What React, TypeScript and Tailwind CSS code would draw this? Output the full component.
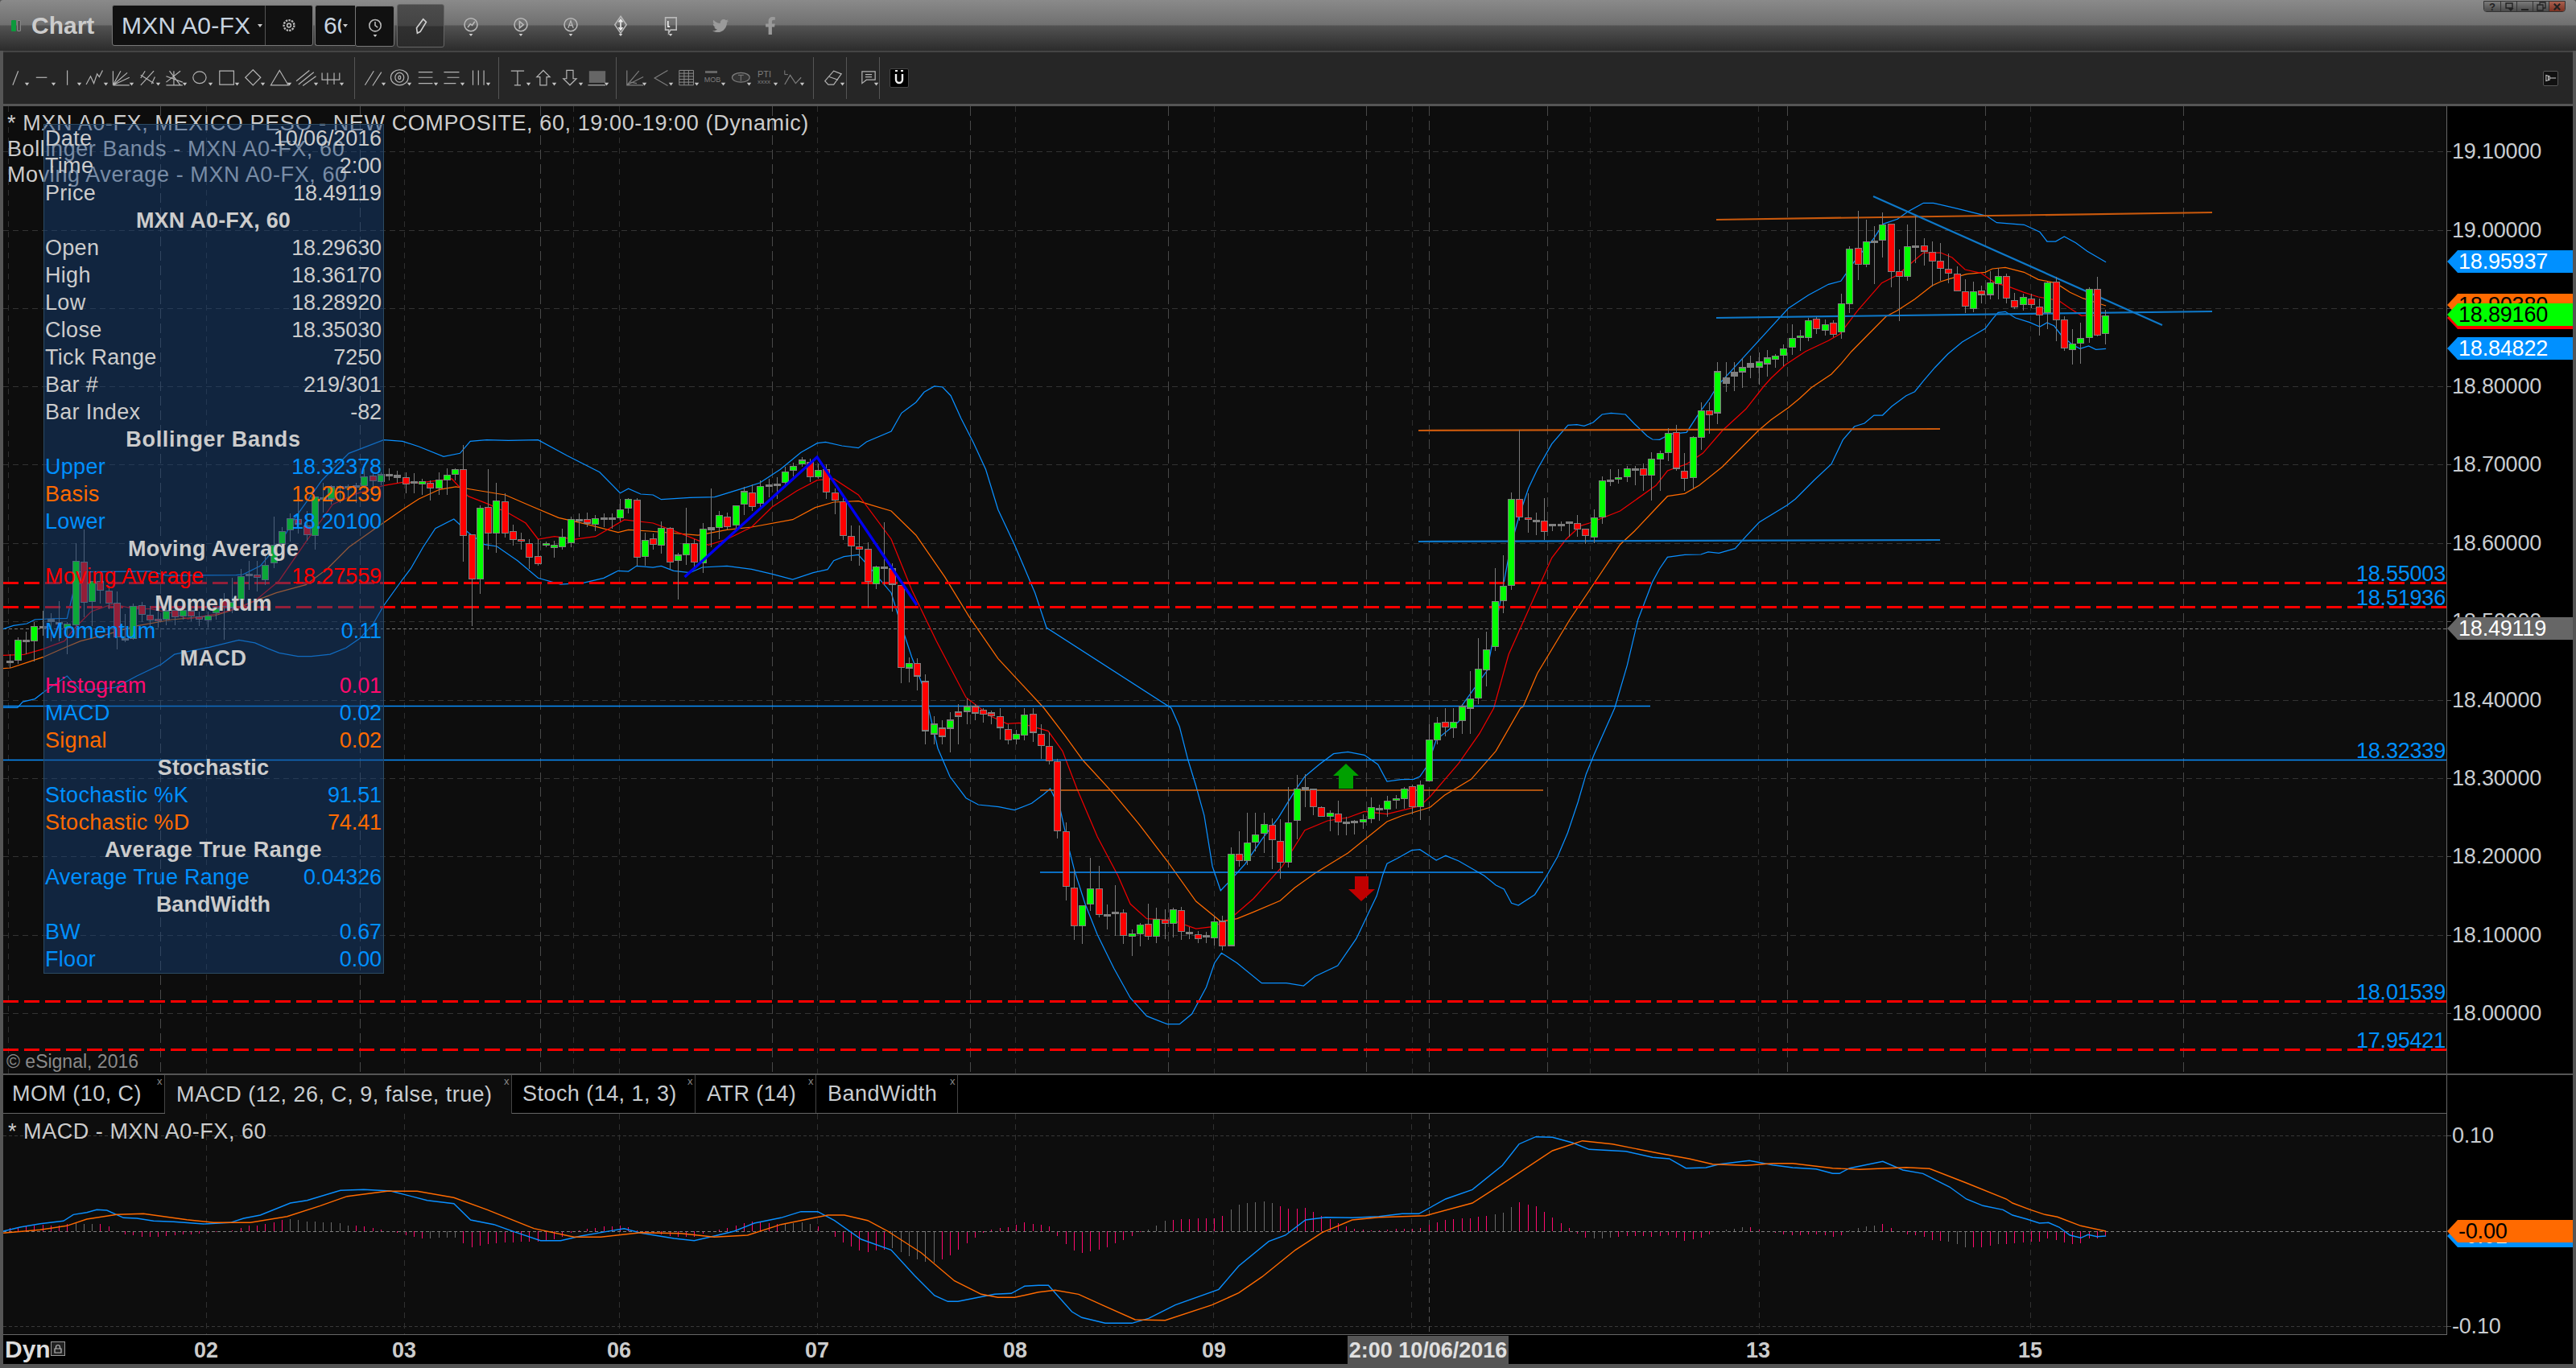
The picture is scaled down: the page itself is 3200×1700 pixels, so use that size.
import { FaTwitter, FaFacebookF } from 'react-icons/fa';

type Bar = { x: number; wt: number; bt: number; bb: number; wb: number; c: number };
type Pt = [number, number];

// candle rows read off the crops: wick top, body top, body bottom, wick bottom, colour (0 red, 1 green, 2 doji)
// y = origin + value / scale, newest bar first
const barRows: [number, number, number[][]][] = [
  [220, 3, [
    [495, 518, 583, 623, 1], [372, 419, 589, 595, 0], [410, 419, 598, 617, 1], [543, 602, 620, 695, 1], [567, 622, 643, 698, 1],
    [520, 533, 637, 648, 0], [372, 392, 532, 612, 0], [390, 395, 505, 567, 1], [453, 485, 514, 590, 0], [435, 455, 475, 490, 0],
    [435, 449, 475, 497, 1], [432, 460, 484, 493, 0], [360, 371, 451, 470, 0], [340, 371, 397, 455, 1], [350, 395, 438, 455, 1],
    [405, 424, 438, 470, 0], [390, 428, 490, 503, 1], [381, 428, 481, 506, 0], [333, 362, 424, 425, 0], [285, 344, 358, 395, 0],
    [245, 314, 340, 387, 0], [240, 281, 313, 407, 0], [228, 257, 276, 330, 0], [143, 256, 260, 320, 2], [178, 260, 370, 387, 1],
    [270, 352, 370, 536, 0], [175, 176, 352, 410, 0], [132, 178, 235, 300, 1], [183, 238, 242, 398, 2], [160, 241, 325, 337, 1],
    [127, 266, 325, 383, 0], [258, 268, 472, 508, 1], [435, 473, 577, 604, 1], [535, 544, 586, 596, 0], [530, 550, 571, 590, 1],
    [522, 530, 565, 585, 0], [525, 536, 598, 613, 1], [570, 592, 598, 647, 1], [548, 602, 634, 662, 1], [625, 640, 664, 705, 1],
    [660, 668, 679, 712, 1],
  ]],
  [0, 1, [
    [435, 445, 452, 468, 1], [438, 450, 456, 478, 1], [442, 452, 456, 470, 2], [445, 457, 462, 482, 1], [450, 463, 467, 486, 2], [450, 470, 476, 487, 2],
    [450, 462, 513, 527, 1],
  ]],
  [480, 3, [
    [60, 91, 107, 178, 0], [60, 91, 190, 236, 1], [185, 190, 340, 380, 1], [250, 316, 343, 390, 0], [145, 173, 306, 315, 0],
    [155, 176, 247, 278, 1], [240, 250, 271, 390, 1], [245, 272, 331, 425, 1], [288, 308, 331, 390, 0], [298, 307, 311, 368, 2],
    [297, 308, 337, 357, 1], [310, 340, 347, 362, 1], [310, 349, 353, 372, 2], [335, 352, 487, 513, 1], [460, 490, 562, 585, 1],
    [530, 532, 556, 587, 0], [480, 511, 532, 562, 0], [503, 505, 509, 560, 2], [505, 514, 517, 540, 2], [514, 515, 517, 540, 2],
    [418, 502, 541, 572, 0], [472, 499, 503, 555, 2], [400, 490, 497, 547, 0], [162, 421, 487, 500, 0], [397, 421, 743, 758, 1],
    [630, 745, 799, 845, 1], [678, 802, 970, 987, 1], [915, 982, 1057, 1120, 1], [938, 1054, 1162, 1185, 1], [1062, 1165, 1200, 1296, 1],
  ]],
  [880, 3, [
    [-15, -6, 46, 97, 1],
    [0, 52, 73, 110, 1], [0, 52, 70, 105, 0], [33, 55, 118, 135, 1], [60, 118, 272, 272, 1], [270, 287, 368, 418, 1],
    [285, 293, 368, 395, 0], [295, 302, 338, 375, 1], [325, 338, 344, 375, 1], [328, 346, 376, 405, 1], [360, 374, 379, 420, 2],
    [332, 371, 412, 430, 1], [395, 415, 425, 450, 1], [418, 421, 425, 470, 2], [405, 424, 428, 473, 2], [345, 394, 424, 473, 0],
    [380, 392, 404, 458, 1], [365, 371, 403, 405, 0], [300, 303, 367, 400, 0], [245, 297, 303, 370, 2], [250, 302, 418, 490, 1],
    [295, 428, 574, 595, 1], [415, 496, 574, 635, 0], [410, 436, 490, 600, 0], [390, 434, 466, 540, 1], [390, 472, 500, 535, 1],
    [390, 502, 568, 585, 1], [458, 544, 568, 590, 0], [520, 544, 885, 888, 1], [775, 795, 886, 903, 0], [775, 796, 856, 885, 1],
    [835, 848, 852, 875, 2], [830, 845, 859, 875, 0], [815, 835, 839, 860, 2], [740, 754, 832, 865, 0], [745, 752, 802, 855, 1],
    [750, 790, 802, 860, 0], [745, 787, 851, 875, 1], [728, 806, 850, 865, 0], [800, 808, 841, 888, 1], [825, 842, 850, 925, 1],
    [750, 764, 847, 878, 0], [660, 760, 764, 850, 2], [732, 769, 773, 825, 2], [588, 674, 769, 780, 0], [558, 674, 731, 755, 1],
    [735, 736, 811, 878, 1], [600, 670, 811, 865, 0], [425, 460, 664, 718, 0], [190, 199, 457, 485, 0], [90, 142, 196, 210, 0],
    [60, 97, 139, 190, 0], [0, 22, 90, 125, 0], [0, 25, 100, 120, 1], [80, 97, 115, 135, 1], [60, 80, 118, 135, 0],
    [0, 31, 72, 118, 0], [10, 18, 28, 60, 0], [0, 8, 22, 55, 0], [-15, -6, 18, 45, 0],
  ]],
  [0, 1, [
    [868, 878, 884, 900, 1], [875, 885, 890, 925, 0], [885, 895, 905, 935, 1], [895, 905, 915, 925, 0], [890, 900, 912, 925, 1],
    [838, 847, 908, 925, 0],
  ]],
  [480, 3, [
    [1015, 1033, 1080, 1135, 0], [1010, 1033, 1050, 1105, 1], [740, 743, 1048, 1108, 0], [660, 681, 738, 840, 0], [508, 673, 680, 740, 2],
    [670, 674, 736, 755, 1], [583, 608, 727, 825, 0], [520, 598, 608, 670, 0], [520, 560, 595, 650, 0], [405, 430, 556, 572, 0],
    [380, 397, 425, 478, 0], [290, 310, 394, 420, 0], [288, 314, 338, 345, 1], [270, 283, 337, 358, 0], [265, 276, 290, 300, 1],
    [285, 298, 314, 335, 1], [300, 319, 359, 378, 1], [340, 364, 368, 420, 2], [345, 368, 372, 415, 2], [350, 374, 437, 455, 1],
    [365, 397, 448, 465, 0], [375, 393, 440, 480, 1], [445, 445, 518, 540, 1], [470, 487, 523, 535, 0], [465, 481, 527, 570, 1],
    [380, 528, 533, 600, 2], [510, 533, 659, 695, 1], [570, 586, 655, 675, 0], [452, 586, 628, 665, 1], [620, 630, 650, 795, 1],
    [525, 529, 655, 680, 0], [505, 529, 593, 625, 1], [548, 568, 589, 610, 0], [545, 574, 634, 670, 1], [418, 424, 637, 670, 0],
    [418, 421, 455, 475, 1], [420, 460, 491, 505, 1], [475, 491, 494, 530, 2], [475, 490, 494, 525, 2], [480, 494, 514, 540, 1],
    [470, 497, 510, 525, 0], [475, 496, 500, 560, 2], [485, 497, 584, 600, 1], [530, 562, 599, 610, 1], [575, 592, 601, 640, 1],
    [580, 586, 593, 600, 1], [570, 634, 661, 670, 0], [570, 586, 637, 680, 0], [545, 571, 578, 610, 0], [515, 541, 571, 595, 0],
    [400, 430, 548, 565, 0], [360, 428, 548, 620, 1], [310, 451, 547, 610, 0], [445, 455, 718, 775, 1], [553, 553, 718, 895, 0],
    [218, 310, 556, 655, 0], [305, 310, 328, 350, 1], [305, 332, 349, 405, 1], [320, 350, 379, 405, 1], [350, 361, 379, 425, 0],
    [345, 355, 364, 405, 1], [325, 355, 360, 400, 2], [320, 340, 364, 400, 0],
  ]],
  [540, 3, [
    [135, 153, 157, 180, 2], [125, 148, 152, 170, 2], [140, 150, 175, 190, 1], [140, 155, 172, 195, 0], [130, 158, 190, 200, 1],
    [180, 190, 193, 255, 2], [185, 193, 196, 240, 2], [190, 193, 198, 255, 2], [190, 195, 240, 260, 1], [180, 235, 240, 290, 2],
    [232, 232, 377, 430, 1], [285, 340, 373, 395, 0], [250, 316, 333, 370, 0], [295, 314, 355, 400, 1], [345, 362, 408, 450, 1],
    [305, 412, 478, 497, 1], [440, 487, 541, 560, 1], [470, 523, 532, 585, 0], [470, 520, 526, 580, 2], [500, 530, 615, 650, 1],
    [535, 625, 645, 665, 1], [590, 620, 640, 765, 0], [640, 648, 664, 690, 1], [660, 676, 691, 720, 1], [660, 680, 688, 715, 0],
    [640, 657, 676, 695, 0], [640, 655, 676, 690, 1], [645, 656, 680, 710, 0], [645, 657, 688, 712, 1], [640, 688, 693, 720, 0],
    [640, 673, 692, 715, 0], [625, 638, 670, 700, 0], [630, 640, 760, 765, 1], [670, 760, 763, 775, 2], [585, 628, 755, 800, 0],
    [565, 583, 628, 650, 0], [515, 548, 580, 630, 0], [545, 548, 622, 715, 1], [355, 475, 625, 680, 0], [405, 472, 710, 760, 1],
    [700, 706, 722, 820, 1], [620, 700, 703, 770, 2], [665, 690, 693, 770, 2], [658, 716, 720, 750, 2], [700, 716, 770, 845, 1],
    [735, 767, 770, 820, 2], [755, 766, 842, 855, 1], [820, 845, 848, 870, 2],
  ]],
];

const bars: Bar[] = [];
barRows.forEach(([origin, scale, rows]) => {
  rows.forEach((r) => {
    const k = bars.length;
    bars.push({
      x: Math.round(2615 - 10.25 * k) + 0.5,
      wt: origin + r[0] / scale,
      bt: origin + r[1] / scale,
      bb: origin + r[2] / scale,
      wb: origin + r[3] / scale,
      c: r[4],
    });
  });
});

const read = (ox: number, sx: number, oy: number, sy: number, list: number[]): Pt[] => {
  const out: Pt[] = [];
  for (let i = 0; i < list.length; i += 2) out.push([ox + list[i] / sx, oy + list[i + 1] / sy]);
  return out;
};

const upperBB = [
  ...read(0, 3, 540, 3, [12, 725, 50, 712, 100, 705, 130, 690, 180, 687, 250, 685, 270, 600, 290, 512, 560, 510, 620, 525, 880, 524, 905, 522, 970, 490, 1050, 395, 1100, 310, 1200, 170, 1300, 70, 1430, 20]),
  ...read(500, 1.96, 480, 3, [0, 205, 40, 225, 100, 262, 140, 250, 165, 205, 205, 200, 258, 202, 330, 200, 400, 258, 480, 320, 530, 398, 550, 382, 580, 402, 610, 405, 630, 422, 700, 415, 760, 413, 830, 380, 870, 360, 920, 310, 970, 247, 1010, 212, 1030, 208, 1070, 222, 1110, 230, 1130, 207, 1190, 168, 1215, 100, 1250, 60, 1270, 22, 1295, 0, 1315, 3, 1335, 35, 1360, 120, 1390, 210, 1420, 310, 1450, 460, 1490, 590, 1515, 680, 1540, 770, 1568, 900]),
  ...read(1200, 1.96, 880, 3, [500, 0, 520, 70, 540, 190, 560, 290, 580, 400, 600, 590, 620, 680, 645, 640, 680, 580, 720, 490, 760, 410, 800, 310, 825, 255, 860, 210, 895, 170, 930, 163, 970, 175, 1003, 210, 1025, 273, 1060, 266, 1090, 265, 1105, 255, 1125, 210, 1145, 118, 1200, 50]),
  ...read(1700, 2.24, 480, 3, [260, 1190, 330, 1060, 370, 780, 395, 600, 420, 480, 445, 380, 470, 310, 510, 215, 555, 145, 580, 143, 600, 148, 625, 135, 650, 105, 675, 100, 715, 105, 740, 140, 775, 185, 790, 198, 810, 199, 840, 178, 885, 172, 920, 100, 950, 45, 970, 0]),
  ...read(2200, 2.8, 220, 3, [0, 560, 60, 490, 130, 440, 200, 400, 243, 388, 300, 300, 357, 230, 390, 175, 440, 157, 475, 130, 530, 97, 565, 97, 650, 118, 750, 145, 785, 170, 880, 178, 935, 205, 960, 240, 990, 240, 1020, 222, 1060, 245, 1100, 277, 1165, 317]),
];

const lowerBB = [
  ...read(0, 3, 690, 2.8, [12, 530, 65, 530, 85, 510, 130, 500, 165, 475, 250, 420, 300, 470, 430, 460, 510, 420, 600, 380, 650, 345, 700, 335, 780, 320, 890, 295, 950, 305, 1000, 325, 1040, 340, 1110, 352, 1160, 352, 1230, 345, 1290, 322, 1340, 290, 1390, 240, 1430, 175]),
  ...read(500, 1.96, 480, 3, [0, 720, 20, 680, 50, 600, 80, 530, 125, 495, 160, 545, 200, 590, 230, 597, 280, 650, 330, 715, 385, 738, 440, 733, 490, 715, 525, 688, 550, 690, 570, 670, 610, 675, 630, 670, 660, 688, 700, 695, 730, 675, 790, 670, 850, 682, 900, 700, 950, 720, 1000, 695, 1035, 683, 1050, 650, 1075, 635, 1110, 628, 1140, 680, 1190, 770, 1210, 870, 1240, 1010, 1270, 1130]),
  ...read(0, 1, 0, 1, [1165, 930, 1180, 965]),
  ...read(1200, 1.96, 880, 3, [0, 335, 30, 360, 80, 368, 118, 380, 160, 355, 190, 320, 205, 300, 230, 380, 250, 520, 265, 610, 290, 730, 320, 845, 360, 970, 400, 1080, 440, 1148, 490, 1178, 520, 1178, 550, 1140, 585, 1040, 605, 950, 622, 913, 660, 950, 720, 1025, 780, 1025, 822, 1035, 850, 1000, 905, 960, 950, 860, 1000, 700, 1015, 620, 1025, 580, 1050, 560, 1085, 530, 1105, 527, 1145, 567, 1168, 550, 1200, 570, 1262, 625, 1290, 660, 1310, 675, 1328, 727, 1345, 735, 1385, 695, 1410, 635, 1440, 555, 1465, 465, 1490, 350, 1510, 245, 1530, 170]),
  ...read(1700, 2.24, 480, 3, [685, 1200, 720, 1040, 750, 870, 790, 730, 810, 680, 832, 637, 880, 628, 925, 627, 945, 618, 975, 622, 1020, 605, 1050, 560, 1087, 507, 1165, 443]),
  ...read(2200, 2.8, 220, 3, [85, 1200, 150, 1130, 210, 1070, 250, 980, 290, 930, 325, 918, 358, 888, 388, 888, 420, 855, 470, 815, 500, 800, 530, 760, 570, 710, 615, 660, 665, 615, 745, 565, 770, 530, 790, 505, 815, 502, 850, 525, 900, 542, 935, 558, 960, 543, 985, 555, 1010, 590, 1048, 625, 1075, 640, 1105, 630, 1130, 643, 1165, 640]),
];

const basis = [
  ...read(0, 3, 540, 3, [12, 872, 40, 870, 100, 850, 160, 830, 240, 795, 300, 770, 400, 745, 500, 715, 640, 690, 800, 675, 880, 650, 950, 620, 1030, 590, 1140, 560, 1220, 500, 1300, 420, 1420, 335]),
  ...read(500, 1.96, 480, 3, [0, 460, 40, 420, 90, 385, 130, 375, 190, 390, 250, 405, 310, 445, 380, 490, 450, 515, 525, 545, 550, 535, 600, 540, 720, 555, 790, 535, 850, 525, 950, 497, 1005, 452, 1050, 432, 1110, 428, 1140, 442, 1190, 465, 1250, 555, 1320, 710, 1380, 860, 1450, 1015]),
  ...read(1200, 1.96, 880, 3, [190, 0, 240, 100, 285, 195, 360, 320, 420, 430, 490, 570, 560, 720, 620, 795, 660, 785, 700, 760, 765, 718, 800, 670, 850, 615, 930, 540, 1025, 423, 1060, 402, 1130, 370, 1165, 325, 1230, 265, 1290, 160, 1350, 0]),
  ...read(1700, 2.24, 480, 3, [430, 1195, 470, 1070, 560, 870, 620, 750, 700, 590, 740, 540, 800, 455, 832, 410, 880, 400, 920, 370, 985, 300, 1085, 165]),
  ...read(2200, 2.8, 220, 3, [0, 905, 60, 860, 100, 825, 140, 785, 210, 735, 245, 695, 280, 650, 340, 585, 400, 520, 440, 497, 500, 455, 560, 405, 590, 390, 620, 380, 680, 362, 745, 355, 770, 342, 815, 337, 880, 355, 930, 382, 990, 395, 1040, 430, 1085, 452, 1130, 468, 1165, 480]),
];

const movAvg = [
  ...read(0, 3, 540, 3, [12, 823, 90, 820, 160, 800, 240, 770, 280, 720, 340, 660, 420, 632, 500, 650, 560, 650, 640, 665, 700, 687, 800, 670, 860, 655, 950, 620, 1040, 545, 1140, 400, 1240, 260, 1330, 220, 1430, 190, 1500, 178, 1560, 180]),
  ...read(500, 1.96, 480, 3, [120, 345, 160, 410, 210, 440, 260, 475, 300, 510, 330, 570, 370, 560, 420, 570, 470, 560, 540, 498, 610, 510, 680, 550, 720, 575, 745, 592, 790, 570, 850, 525, 900, 450, 960, 390, 1010, 350, 1050, 345, 1110, 405, 1190, 570, 1240, 760, 1300, 950]),
  ...read(1200, 1.96, 880, 3, [0, -40, 60, 30, 100, 58, 130, 55, 200, 85, 235, 160, 270, 300, 320, 480, 370, 625, 400, 730, 440, 785, 500, 790, 560, 822, 600, 815, 640, 790, 700, 710, 770, 590, 825, 455, 880, 420, 930, 408, 970, 385, 1025, 395, 1065, 380, 1105, 365, 1130, 330, 1200, 205, 1250, 95, 1285, 0]),
  ...read(1700, 2.24, 480, 3, [390, 1000, 460, 790, 510, 640, 550, 570, 590, 520, 615, 510, 700, 465, 800, 370, 832, 315, 885, 290, 930, 250, 985, 165, 1050, 85, 1100, 0]),
  ...read(2200, 2.8, 220, 3, [0, 750, 50, 700, 120, 650, 200, 610, 240, 585, 300, 500, 385, 395, 440, 365, 500, 310, 530, 282, 590, 282, 630, 300, 675, 345, 730, 358, 780, 395, 830, 410, 880, 430, 930, 447, 1000, 460, 1040, 490, 1080, 517, 1110, 515, 1160, 520]),
];

const macdLine = [
  ...read(0, 1.206, 1280, 3, [5, 750, 30, 735, 60, 722, 95, 712, 110, 688, 130, 680, 145, 670, 160, 672, 185, 700, 205, 702, 230, 712, 260, 715, 305, 723, 345, 718, 365, 702, 390, 690, 435, 645, 460, 635, 510, 598, 545, 595, 585, 600, 640, 635, 680, 647, 705, 708, 740, 725, 770, 752, 810, 785, 840, 785, 870, 768, 935, 740, 960, 757, 1010, 777, 1040, 785, 1070, 768, 1100, 750, 1130, 720, 1170, 700, 1200, 677, 1225, 677, 1250, 710, 1290, 780, 1335, 820, 1370, 915, 1400, 990, 1420, 1012, 1435, 1012, 1490, 985, 1515, 982, 1535, 955]),
  ...read(1290, 1.206, 1390, 3, [0, 622, 15, 622, 50, 720, 65, 742, 100, 763, 140, 763, 165, 745, 205, 695, 270, 637, 300, 550, 345, 458, 370, 435, 400, 378, 430, 368, 470, 370, 510, 365, 545, 355, 570, 355, 610, 300, 650, 265, 695, 175, 720, 95, 745, 68, 770, 70, 800, 90, 825, 115, 880, 122, 920, 145, 945, 150, 970, 185, 1000, 183, 1020, 170, 1065, 157, 1100, 173, 1130, 183, 1165, 188, 1190, 205, 1200, 205, 1215, 185, 1265, 160, 1295, 192, 1325, 205, 1365, 255, 1390, 300, 1415, 325, 1445, 340]),
  ...read(2500, 2.24, 1280, 3, [0, 690, 40, 705, 75, 720, 100, 718, 130, 735, 160, 765, 190, 775, 210, 763, 235, 770, 260, 768]),
];

const signalLine = [
  ...read(0, 1.206, 1280, 3, [5, 757, 60, 745, 100, 730, 130, 705, 175, 688, 215, 685, 280, 707, 320, 718, 375, 718, 430, 695, 480, 655, 520, 620, 580, 601, 625, 601, 680, 625, 730, 670, 800, 740, 860, 772, 900, 772, 960, 755, 1020, 758, 1070, 772, 1120, 765, 1170, 725, 1240, 690, 1265, 690, 1300, 710, 1330, 750, 1380, 830, 1430, 935, 1470, 985, 1495, 997, 1520, 997]),
  ...read(1290, 1.206, 1390, 3, [0, 647, 25, 640, 60, 655, 100, 700, 145, 750, 190, 752, 260, 695, 300, 650, 335, 590, 385, 490, 425, 425, 470, 378, 510, 368, 580, 362, 650, 315, 700, 235, 770, 120, 815, 83, 860, 95, 930, 130, 975, 150, 1010, 170, 1060, 175, 1100, 167, 1130, 167, 1190, 185, 1230, 190, 1300, 182, 1335, 187, 1390, 240, 1450, 300]),
  ...read(2500, 2.24, 1280, 3, [0, 645, 50, 670, 90, 688, 125, 697, 190, 730, 260, 750]),
];

const toPath = (pts: Pt[]) => pts.map((p) => `${p[0].toFixed(1)},${p[1].toFixed(1)}`).join(' ');

const valueAt = (pts: Pt[], x: number) => {
  for (let i = 1; i < pts.length; i++) {
    if (x <= pts[i][0]) {
      const t = (x - pts[i - 1][0]) / (pts[i][0] - pts[i - 1][0] || 1);
      return pts[i - 1][1] + t * (pts[i][1] - pts[i - 1][1]);
    }
  }
  return pts[pts.length - 1][1];
};

const grayRanges = [[91, 124], [356, 440], [530, 572], [970, 1012], [1103, 1161], [1420, 1450], [1525, 1590], [1854, 1887], [1978, 2003], [2144, 2170], [2297, 2330], [2420, 2450], [2480, 2492]];
const barColor = { 0: '#ff0000', 1: '#00ff00', 2: '#808080' } as Record<number, string>;

const majorX = [199, 447, 671, 959, 1205, 1451, 1697, 1775, 1922, 2220, 2466, 2712];
const minorX = [10, 256, 502, 712, 769, 1015, 1261, 1508, 1754, 1975, 2184, 2522];
const gridY = [188, 286, 383, 480, 577, 675, 772, 870, 967, 1064, 1162, 1259];
const redLevels = [724, 754, 1244, 1304];

const PriceChart = () => (
  <svg viewBox="4 132 3035 1202" className="absolute inset-0 w-[3035px] h-[1202px]">
    {gridY.map((y) => <line key={y} x1="4" x2="3039" y1={y + 0.5} y2={y + 0.5} stroke="#333333" strokeDasharray="7 5" />)}
    {minorX.map((x) => <line key={x} x1={x + 0.5} x2={x + 0.5} y1="132" y2="1334" stroke="#2e2e2e" strokeDasharray="7 6" />)}
    {majorX.map((x) => <line key={x} x1={x + 0.5} x2={x + 0.5} y1="132" y2="1334" stroke="#484848" strokeDasharray="12 6" />)}
    <line x1="4" x2="3039" y1="781.5" y2="781.5" stroke="#7a7a7a" strokeDasharray="4 3" />

    <polyline points={toPath(upperBB)} fill="none" stroke="#0a8fff" strokeWidth="1.25" />
    <polyline points={toPath(lowerBB)} fill="none" stroke="#0a8fff" strokeWidth="1.25" />
    <polyline points={toPath(basis)} fill="none" stroke="#ff6a00" strokeWidth="1.25" />
    <polyline points={toPath(movAvg)} fill="none" stroke="#ee0000" strokeWidth="1.25" />

    {redLevels.map((y) => <line key={y} x1="4" x2="3039" y1={y} y2={y} stroke="#ff0000" strokeWidth="3" strokeDasharray="19 7" shapeRendering="crispEdges" />)}
    <line x1="4" x2="2050" y1="877.5" y2="877.5" stroke="#0a8fff" strokeWidth="1.4" />
    <line x1="4" x2="3039" y1="944.5" y2="944.5" stroke="#0a8fff" strokeWidth="1.4" />

    <line x1="2132" x2="2748" y1="273" y2="264" stroke="#c8580c" strokeWidth="2.2" />
    <line x1="1762" x2="2410" y1="535" y2="533" stroke="#c8580c" strokeWidth="2.2" />
    <line x1="1292" x2="1917" y1="982" y2="982" stroke="#e06a10" strokeWidth="1.6" />
    <line x1="2132" x2="2748" y1="395" y2="387" stroke="#0e78c8" strokeWidth="2.2" />
    <line x1="1762" x2="2410" y1="673" y2="671" stroke="#0e78c8" strokeWidth="2.2" />
    <line x1="1292" x2="1917" y1="1084" y2="1084" stroke="#0a8fff" strokeWidth="1.6" />
    <line x1="2327" x2="2686" y1="244" y2="404" stroke="#0e78c8" strokeWidth="2.2" />

    {bars.map((b) => (
      <g key={b.x} shapeRendering="crispEdges">
        <line x1={b.x} x2={b.x} y1={b.wt} y2={b.wb} stroke="#7a7a7a" />
        <rect x={b.x - 4} y={b.bt} width="8" height={Math.max(b.bb - b.bt, 2)} fill={barColor[b.c]} stroke="#808080" strokeWidth="1.5" />
      </g>
    ))}

    <polyline points="850.5,717 1015,568 1139,752" fill="none" stroke="#0000f0" strokeWidth="3.4" />
    <polygon points="1672,949 1688,964 1681,964 1681,980 1663,980 1663,964 1656,964" fill="#00a000" />
    <polygon points="1683,1089 1700,1089 1700,1105 1708,1105 1691,1120 1675,1105 1683,1105" fill="#c00000" />
  </svg>
);

const MacdChart = () => {
  const xs = bars.map((b) => b.x).filter((x) => x > 8);
  return (
    <svg viewBox="4 1384 3035 275" className="absolute inset-0 w-[3035px] h-[275px]">
      {[1411, 1648].map((y) => <line key={y} x1="4" x2="3039" y1={y + 0.5} y2={y + 0.5} stroke="#383838" strokeDasharray="4 3" />)}
      {[256, 502, 769, 1015, 1261, 1507, 1753, 2185, 2522].map((x) => <line key={x} x1={x + 0.5} x2={x + 0.5} y1="1384" y2="1659" stroke="#303030" strokeDasharray="7 6" />)}
      <line x1="1775.5" x2="1775.5" y1="1384" y2="1659" stroke="#555555" strokeDasharray="7 5" />
      {xs.map((x) => {
        const h = valueAt(signalLine, x) - valueAt(macdLine, x);
        const isGray = grayRanges.some((r) => x >= r[0] && x <= r[1]);
        return <line key={x} x1={x} x2={x} y1="1530" y2={1530 - h} stroke={isGray ? '#6a6a6a' : '#ff0a6e'} strokeWidth="1" shapeRendering="crispEdges" />;
      })}
      <line x1="4" x2="3039" y1="1530.5" y2="1530.5" stroke="#808080" strokeDasharray="4 3" />
      <polyline points={toPath(macdLine)} fill="none" stroke="#0a8fff" strokeWidth="1.4" />
      <polyline points={toPath(signalLine)} fill="none" stroke="#ff6a00" strokeWidth="1.4" />
      <line x1="4" x2="3039" y1="1658.5" y2="1658.5" stroke="#666666" />
    </svg>
  );
};

const axisLabels = [
  ['19.10000', 188], ['19.00000', 286], ['18.90000', 383], ['18.80000', 480], ['18.70000', 577], ['18.60000', 675],
  ['18.50000', 772], ['18.40000', 870], ['18.30000', 967], ['18.20000', 1064], ['18.10000', 1162], ['18.00000', 1259],
] as [string, number][];

const flags = [
  { t: '18.95937', y: 311, bg: 'bg-[#0090ff]', fg: 'text-white' },
  { t: '18.90380', y: 365, bg: 'bg-[#ff6a00]', fg: 'text-black' },
  { t: '18.87000', y: 381, bg: 'bg-[#ff0000]', fg: 'text-black' },
  { t: '18.89160', y: 377, bg: 'bg-[#00ff00]', fg: 'text-black' },
  { t: '18.84822', y: 419, bg: 'bg-[#0090ff]', fg: 'text-white' },
  { t: '18.49119', y: 767, bg: 'bg-[#666666]', fg: 'text-white' },
];

const Flag = ({ t, top, bg, fg }: { t: string; top: number; bg: string; fg: string }) => (
  <div
    className={`absolute left-0 w-full h-[28px] ${bg} ${fg} pl-[14px] text-[27px] leading-[28px] tracking-[-0.2px] [clip-path:polygon(0_50%,13px_0,100%_0,100%_100%,13px_100%)]`}
    style={{ top }}
  >
    {t}
  </div>
);

const PriceAxis = () => (
  <div className="relative w-[157px] h-[1202px] bg-black border-l border-[#666666] overflow-hidden">
    {axisLabels.map(([t, y]) => (
      <div key={t} className="absolute left-0 flex items-center h-[30px] text-[#c8ccd0] text-[27px] tracking-[-0.2px]" style={{ top: y - 132 - 15 }}>
        <span className="w-[5px] h-px bg-[#555555] mr-[1px]" />
        {t}
      </div>
    ))}
    {flags.map((f) => <Flag key={f.t} t={f.t} top={f.y - 132} bg={f.bg} fg={f.fg} />)}
  </div>
);

type Row = { l: string; v?: string; c?: string; track?: string };
const gray = 'text-[#cccccc]';
const blue = 'text-[#0090ff]';
const orange = 'text-[#ff6a00]';
const red = 'text-[#ff0000]';
const pink = 'text-[#ff0a6e]';

const dataRows: Row[] = [
  { l: 'Date', v: '10/06/2016', c: gray },
  { l: 'Time', v: '2:00', c: gray },
  { l: 'Price', v: '18.49119', c: gray },
  { l: 'MXN A0-FX, 60', track: 'tracking-[0.2px]' },
  { l: 'Open', v: '18.29630', c: gray },
  { l: 'High', v: '18.36170', c: gray },
  { l: 'Low', v: '18.28920', c: gray },
  { l: 'Close', v: '18.35030', c: gray },
  { l: 'Tick Range', v: '7250', c: gray },
  { l: 'Bar #', v: '219/301', c: gray },
  { l: 'Bar Index', v: '-82', c: gray },
  { l: 'Bollinger Bands', track: 'tracking-[0.7px]' },
  { l: 'Upper', v: '18.32378', c: blue },
  { l: 'Basis', v: '18.26239', c: orange },
  { l: 'Lower', v: '18.20100', c: blue },
  { l: 'Moving Average', track: 'tracking-[0.4px]' },
  { l: 'Moving Average', v: '18.27559', c: red },
  { l: 'Momentum', track: 'tracking-[0.2px]' },
  { l: 'Momentum', v: '0.11', c: blue },
  { l: 'MACD', track: 'tracking-[0.5px]' },
  { l: 'Histogram', v: '0.01', c: pink },
  { l: 'MACD', v: '0.02', c: blue },
  { l: 'Signal', v: '0.02', c: orange },
  { l: 'Stochastic', track: 'tracking-[0.2px]' },
  { l: 'Stochastic %K', v: '91.51', c: blue },
  { l: 'Stochastic %D', v: '74.41', c: orange },
  { l: 'Average True Range', track: 'tracking-[0.55px]' },
  { l: 'Average True Range', v: '0.04326', c: blue },
  { l: 'BandWidth' },
  { l: 'BW', v: '0.67', c: blue },
  { l: 'Floor', v: '0.00', c: blue },
];

const DataWindow = () => (
  <div className="absolute left-[50px] top-[22px] w-[423px] border border-[#2b4a62] bg-[rgba(24,67,122,0.465)] pl-[1px] pr-[2px] text-[27px] leading-[34px]">
    {dataRows.map((r, i) =>
      r.v ? (
        <div key={i} className={`flex justify-between h-[34px] tracking-[0.3px] ${r.c}`}>
          <span>{r.l}</span>
          <span className="tracking-[-0.1px]">{r.v}</span>
        </div>
      ) : (
        <div key={i} className={`h-[34px] text-center font-bold text-[#cccccc] ${r.track ?? ''}`}>{r.l}</div>
      ),
    )}
  </div>
);

const levelLabels = [
  { t: '18.55003', y: 713 }, { t: '18.51936', y: 743 }, { t: '18.32339', y: 933 }, { t: '18.01539', y: 1233 }, { t: '17.95421', y: 1293 },
];

// title bar glyphs, 30x36 box
const TopIcon = ({ children, caret = true }: { children: React.ReactNode; caret?: boolean }) => (
  <svg viewBox="0 0 30 36" className="w-[24px] h-[29px] text-[#b8b8b8]" fill="none" stroke="currentColor" strokeWidth="2">
    {children}
    {caret && <path d="M12 31h6l-3 4z" fill="#d0d0d0" stroke="none" />}
  </svg>
);

const titleIcons = [
  <><circle cx="15" cy="17" r="10" /><path d="M10 21l4-5 3 2 4-6" /></>,
  <><circle cx="15" cy="17" r="10" /><path d="M13 12l6 5-6 5z" /></>,
  <><circle cx="15" cy="17" r="10" /><path d="M11 22l4-11 4 11M12.5 18h5" strokeWidth="1.6" /></>,
  <><path d="M15 4l9 13-9 13-9-13z" /><path d="M15 9v16M12 13l3-4 3 4M12 21l3 4 3-4" stroke="#eeeeee" /></>,
  <><path d="M7 6H24V25H15L12 30V25H7z" /><path d="M11 11V20H14" stroke="#eeeeee" /></>,
];

// toolbar glyphs, 24x30 box squeezed to the strip height
const toolPaths: Record<string, string> = {
  line: 'M8 27L13 3',
  hline: 'M5 14H15',
  vline: 'M10 2V27',
  wave: 'M3 26L7 12L10 24L13 8L15 13L18 2',
  fan: 'M4 27V3M4 27L17 6M4 27L19 14M4 27H19M4 27L11 3',
  cross: 'M5 27L17 3M5 10L17 24M9 3L5 15M15 25L18 13',
  gann: 'M4 27H19M7 3L17 27M17 3L4 22M11 3V27M4 12L19 22',
  circle: 'M17 14a6 10 0 1 1-12 0a6 10 0 1 1 12 0z',
  rect: 'M5 3H18V26H5z',
  diamond: 'M12 1L19 14L12 27L5 14z',
  triangle: 'M12 2L20 27H4z',
  channel: 'M3 20L15 2M5 26L19 5M9 28L21 12',
  pitch: 'M3 6V18H19V6M8 6V26M14 6V26',
  par: 'M4 27L12 3M11 28L19 5',
  rings: 'M20 14a8 13 0 1 1-16 0a8 13 0 1 1 16 0zM16 14a4 8 0 1 1-8 0a4 8 0 1 1 8 0zM13 14a1 3 0 1 1-2 0a1 3 0 1 1 2 0z',
  fib: 'M5 5H18M5 14H18M5 24H18',
  fib2: 'M4 5H18M7 14H18M4 24H15',
  vlines: 'M7 2V27M12 2V27M17 2V27',
  text: 'M5 3H17M11 3V27M8 27H14',
  up: 'M11 2L17 13H14V27H8V13H5z',
  down: 'M8 2H14V16H17L11 27L5 16H8z',
  block: 'M4 27H20',
  dfan: 'M5 2V27H20M5 27L16 3M5 27L20 13M8 22L14 24',
  arrows: 'M18 2L6 15L18 28',
  pivot: 'M6 3H18',
  tl: 'M11 10H16M13.5 10V20',
  zig: 'M5 26L10 10L15 24L20 14',
  eraser: 'M5 20L13 3L20 8L13 26H8zM9 13L17 18',
  chat: 'M8 4H20V18H12L8 24zM11 9H17M11 13H17',
};

const toolCaret = 'M19 23h4l-2 5z';

const Tool = ({ name, dim }: { name: string; dim?: boolean }) => (
  <svg viewBox="0 0 24 30" preserveAspectRatio="none" className={`w-[32.6px] h-[22px] ${dim ? 'text-[#7d7d7d]' : 'text-[#b4b4b4]'}`} fill="none" stroke="currentColor">
    <path d={toolPaths[name]} strokeWidth="1.2" vectorEffect="non-scaling-stroke" />
    {name === 'block' && <rect x="5" y="3" width="15" height="20" fill="#666666" stroke="none" />}
    {name === 'tl' && <circle cx="13.5" cy="14" r="8" fill="#333333" strokeWidth="1.2" vectorEffect="non-scaling-stroke" />}
    {name === 'tl' && <path d="M11 10H16M13.5 10V20" strokeWidth="1" vectorEffect="non-scaling-stroke" />}
    {name === 'zig' && <path d="M5 2V9H8" strokeWidth="1" vectorEffect="non-scaling-stroke" />}
    <path d={toolCaret} fill="#c4c4c4" stroke="none" />
  </svg>
);

const PivotIcon = () => (
  <div className="relative w-[32.6px] h-[22px]">
    <div className="absolute left-[6px] top-[2px] w-[15px] h-[3px] bg-[#666666]" />
    <span className="absolute left-[5px] top-[8px] text-[9px] leading-[10px] text-[#7d7d7d]">MOB</span>
    <svg viewBox="0 0 24 30" preserveAspectRatio="none" className="absolute inset-0 w-full h-full"><path d={toolCaret} fill="#c4c4c4" /></svg>
  </div>
);

const PtiIcon = () => (
  <div className="relative w-[32.6px] h-[22px]">
    <span className="absolute left-[6px] top-[0px] text-[11px] leading-[12px] text-[#7d7d7d]">PTI</span>
    <span className="absolute left-[6px] top-[12px] text-[8px] leading-[8px] text-[#7d7d7d]">xxxx</span>
    <svg viewBox="0 0 24 30" preserveAspectRatio="none" className="absolute inset-0 w-full h-full"><path d={toolCaret} fill="#c4c4c4" /></svg>
  </div>
);

const GridIcon = () => (
  <svg viewBox="0 0 24 30" preserveAspectRatio="none" className="w-[32.6px] h-[22px]" fill="none" stroke="#8a8a8a">
    <path d="M5 2H18V27H5zM5 7H18M5 12H18M5 17H18M5 22H18M9.5 2V27M13.5 2V27" strokeWidth="1" vectorEffect="non-scaling-stroke" />
    <path d={toolCaret} fill="#c4c4c4" stroke="none" />
  </svg>
);

const Sep = ({ cls }: { cls: string }) => <div className={`w-px h-[52px] bg-[#555555] ${cls}`} />;

const Toolbar = () => (
  <div className="mx-[4px] h-[64px] bg-[#262626] flex items-center pl-px">
    <div className="flex">
      {['line', 'hline', 'vline', 'wave', 'fan', 'cross', 'gann', 'circle', 'rect', 'diamond', 'triangle', 'channel', 'pitch'].map((n) => <Tool key={n} name={n} />)}
    </div>
    <Sep cls="ml-[11px]" />
    <div className="flex ml-[7px]">
      {['par', 'rings', 'fib', 'fib2', 'vlines'].map((n) => <Tool key={n} name={n} />)}
    </div>
    <Sep cls="ml-[8px]" />
    <div className="flex ml-[8px]">
      {['text', 'up', 'down', 'block'].map((n) => <Tool key={n} name={n} />)}
    </div>
    <Sep cls="ml-[7px]" />
    <div className="flex ml-[6px]">
      <Tool name="dfan" dim />
      <Tool name="arrows" dim />
      <GridIcon />
      <PivotIcon />
      <Tool name="tl" dim />
      <PtiIcon />
      <Tool name="zig" dim />
    </div>
    <Sep cls="ml-[10px]" />
    <div className="ml-[7px]"><Tool name="eraser" /></div>
    <Sep cls="ml-0" />
    <div className="ml-[8px]"><Tool name="chat" /></div>
    <Sep cls="ml-0" />
    <div className="ml-[12px] w-[24px] h-[24px] bg-black border border-[#444444] rounded-[2px] flex items-center justify-center">
      <svg viewBox="0 0 16 20" className="w-[16px] h-[20px]" fill="none" stroke="#eeeeee" strokeWidth="2.4">
        <path d="M4 5V12a4 4 0 0 0 8 0V5" />
        <path d="M3 1H6M10 1H13" strokeWidth="2" />
      </svg>
    </div>
    <div className="ml-auto mr-[18px] w-[19px] h-[19px] bg-[#111111] border border-[#555555] rounded-[2px] flex items-center justify-center">
      <svg viewBox="0 0 16 16" className="w-[14px] h-[14px]" fill="none" stroke="#cccccc" strokeWidth="1.2">
        <path d="M1 4L6 5.5V10.5L1 12zM6 8H15M4 5V11" />
      </svg>
    </div>
  </div>
);

const WinButtons = () => (
  <div className="flex h-[14px] mt-px border border-[#333333] rounded-b-[4px] overflow-hidden">
    {['?', 'w', 'm', 'r', 'x'].map((k) => (
      <div key={k} className={`w-[20px] h-full flex items-center justify-center border-l first:border-l-0 border-[#333333] ${k === 'x' ? 'bg-gradient-to-b from-[#a8604f] to-[#7d3020]' : 'bg-gradient-to-b from-[#7a7a7a] to-[#4a4a4a]'}`}>
        {k === '?' && <span className="text-[13px] font-bold leading-none text-[#222222]">?</span>}
        {k === 'w' && <svg viewBox="0 0 12 12" className="w-[12px] h-[12px]" fill="none" stroke="#222222" strokeWidth="1.4"><path d="M2 2H10V8H2zM6 9h4l-2 2z" /></svg>}
        {k === 'm' && <div className="w-[9px] h-[2px] mt-[7px] bg-[#222222]" />}
        {k === 'r' && <svg viewBox="0 0 12 12" className="w-[12px] h-[12px]" fill="none" stroke="#222222" strokeWidth="1.3"><path d="M1 4H8V11H1zM4 4V1H11V8H8" /></svg>}
        {k === 'x' && <svg viewBox="0 0 12 12" className="w-[11px] h-[11px]" fill="none" stroke="#222222" strokeWidth="2.4"><path d="M2 2L10 10M10 2L2 10" /></svg>}
      </div>
    ))}
  </div>
);

const TitleBar = () => (
  <div className="relative h-[63px] flex items-center rounded-t-[4px] bg-[linear-gradient(to_bottom,#8a8a8a_0px,#707070_31px,#525252_32px,#2c2c2c_63px)]">
    <div className="ml-[14px] w-[6px] h-[14px] bg-[#0c9a3c] rounded-[1px]" />
    <div className="ml-px w-[5px] h-[14px] bg-[#555555] border border-[#888888] rounded-[1px]" />
    <span className="ml-[13px] w-[100px] text-[30px] font-bold text-[#cccccc]">Chart</span>
    <div className="w-[250px] h-[51px] flex bg-[#111111] border border-[#777777] rounded-[3px]">
      <div className="w-[189px] flex items-center pl-[11px] text-[30px] tracking-[0.2px] text-[#c8d4e0]">
        MXN A0-FX
        <span className="ml-[9px] w-0 h-0 border-x-[3px] border-t-[4px] border-x-transparent border-t-[#cccccc]" />
      </div>
      <div className="flex-1 flex items-center justify-center border-l border-[#555555]">
        <TopIcon caret={false}>
          <circle cx="15" cy="18" r="8" strokeDasharray="3 1.5" strokeWidth="3" />
          <circle cx="15" cy="18" r="3" />
        </TopIcon>
      </div>
    </div>
    <div className="ml-[2px] w-[50px] h-[51px] flex items-center bg-[#111111] border border-[#777777] border-r-0 rounded-l-[3px] overflow-hidden pl-[10px]">
      <span className="w-[22px] overflow-hidden text-[30px] text-[#c8d4e0]">60</span>
      <span className="ml-[2px] w-0 h-0 border-x-[3px] border-t-[4px] border-x-transparent border-t-[#cccccc]" />
    </div>
    <div className="mt-[2px] w-[49px] h-[51px] flex items-center justify-center bg-[#111111] border border-[#777777] rounded-[3px]">
      <TopIcon><circle cx="15" cy="17" r="9" /><path d="M15 11v6l4 3" /></TopIcon>
    </div>
    <div className="ml-[3px] w-[59px] h-[54px] flex items-center justify-center border border-[#666666] rounded-[3px] bg-[linear-gradient(to_bottom,#4c4c4c_0px,#444444_26px,#303030_27px,#2a2a2a_54px)]">
      <svg viewBox="0 0 24 24" className="w-[22px] h-[22px]" fill="none" stroke="#d0d0d0" strokeWidth="1.8"><path d="M7 22L6 15L15 3L19 7L11 20z" /></svg>
    </div>
    <div className="ml-[2px] flex items-center">
      {titleIcons.map((ic, i) => <div key={i} className="w-[62px] flex justify-center"><TopIcon>{ic}</TopIcon></div>)}
      <div className="w-[62px] flex justify-center"><FaTwitter className="w-[20px] h-[20px] text-[#9a9a9a]" /></div>
      <div className="w-[62px] flex justify-center"><FaFacebookF className="w-[14px] h-[22px] text-[#9a9a9a]" /></div>
    </div>
    <div className="absolute right-[13px] top-0"><WinButtons /></div>
  </div>
);

const tabs = [
  { t: 'MOM (10, C)', w: 'w-[201px]', pl: 'pl-[11px]' },
  { t: 'MACD (12, 26, C, 9, false, true)', w: 'w-[431px]', pl: 'pl-[14px]', on: true },
  { t: 'Stoch (14, 1, 3)', w: 'w-[228px]', pl: 'pl-[13px]' },
  { t: 'ATR (14)', w: 'w-[150px]', pl: 'pl-[14px]' },
  { t: 'BandWidth', w: 'w-[176px]', pl: 'pl-[14px]' },
];

const TabRow = () => (
  <div className="flex h-[48px]">
    <div className="w-[3035px] flex bg-black border-b border-[#666666]">
      {tabs.map((t) => (
        <div
          key={t.t}
          className={`relative ${t.w} ${t.pl} flex items-center text-[27px] tracking-[0.45px] text-[#c8ccd0] border-r border-[#444444] ${t.on ? 'h-[48px] bg-[#0d0d0d]' : 'h-[47px]'}`}
        >
          {t.t}
          <span className="absolute right-[2px] top-[1px] text-[13px] leading-[14px] text-[#888888]">x</span>
        </div>
      ))}
    </div>
    <div className="w-[157px] bg-black border-l border-[#666666]" />
  </div>
);

const MacdAxis = () => (
  <div className="relative w-[157px] h-[275px] bg-black border-l border-[#666666] overflow-hidden text-[27px] text-[#c8ccd0]">
    <div className="absolute left-0 top-[12px] flex items-center h-[30px] tracking-[-0.2px]"><span className="w-[5px] h-px bg-[#555555] mr-[1px]" />0.10</div>
    <div className="absolute left-0 top-[249px] flex items-center h-[30px] tracking-[-0.2px]"><span className="w-[5px] h-px bg-[#555555] mr-[1px]" />-0.10</div>
    <Flag t="-0.01" top={138} bg="bg-[#0090ff]" fg="text-white" />
    <Flag t="-0.00" top={132} bg="bg-[#ff6a00]" fg="text-black" />
  </div>
);

const TimeAxis = () => (
  <svg viewBox="4 1660 3192 36" className="block w-[3192px] h-[36px] bg-black font-bold" fontSize="27" fill="#cccccc" textAnchor="middle">
    {([['02', 256], ['03', 502], ['06', 769], ['07', 1015], ['08', 1261], ['09', 1508], ['13', 2184], ['15', 2522]] as [string, number][]).map(([t, x]) => (
      <text key={t} x={x} y="1688">{t}</text>
    ))}
    <text x="6" y="1688" textAnchor="start" fill="#dddddd" fontSize="30">Dyn</text>
    <rect x="63.5" y="1668.5" width="17" height="17" fill="#222222" stroke="#999999" />
    <path d="M68 1682v-5h8v5zM69.5 1677v-2a2.5 2.5 0 0 1 5 0v2" fill="none" stroke="#bbbbbb" strokeWidth="1.2" />
    <rect x="1674" y="1661" width="200" height="35" fill="#555555" />
    <text x="1774" y="1688" fill="#e0e0e0">2:00 10/06/2016</text>
  </svg>
);

export default function App() {
  return (
    <div className="w-[3200px] h-[1700px] flex flex-col overflow-hidden bg-[#555555] font-['Liberation_Sans',Arial,sans-serif]">
      <TitleBar />
      <div className="h-[2px] bg-[#444444] mx-[4px]" />
      <Toolbar />
      <div className="h-[3px]" />

      <div className="mx-[4px] flex h-[1202px]">
        <div className="relative w-[3035px] bg-[#0d0d0d] overflow-hidden">
          <PriceChart />
          <div className="absolute left-[5px] top-[5px] text-[27px] leading-[32px] tracking-[0.6px] text-[#cccccc] whitespace-nowrap">
            <div>* MXN A0-FX, MEXICO PESO - NEW COMPOSITE, 60, 19:00-19:00 (Dynamic)</div>
            <div>Bollinger Bands - MXN A0-FX, 60</div>
            <div>Moving Average - MXN A0-FX, 60</div>
          </div>
          <DataWindow />
          {levelLabels.map((l) => (
            <div key={l.t} className="absolute right-[1px] h-[30px] leading-[30px] text-[27px] tracking-[-0.2px] text-[#0090ff]" style={{ top: l.y - 132 - 15 }}>{l.t}</div>
          ))}
          <div className="absolute left-[4px] bottom-[1px] text-[23px] leading-[28px] text-[#8a8a8a]">© eSignal, 2016</div>
        </div>
        <PriceAxis />
      </div>

      <div className="h-[2px]" />
      <div className="mx-[4px]"><TabRow /></div>

      <div className="mx-[4px] flex h-[275px]">
        <div className="relative w-[3035px] bg-[#0d0d0d] overflow-hidden">
          <MacdChart />
          <div className="absolute left-[6px] top-[7px] text-[27px] leading-[30px] tracking-[0.55px] text-[#cccccc]">* MACD - MXN A0-FX, 60</div>
        </div>
        <MacdAxis />
      </div>

      <div className="mx-[4px]"><TimeAxis /></div>
    </div>
  );
}
